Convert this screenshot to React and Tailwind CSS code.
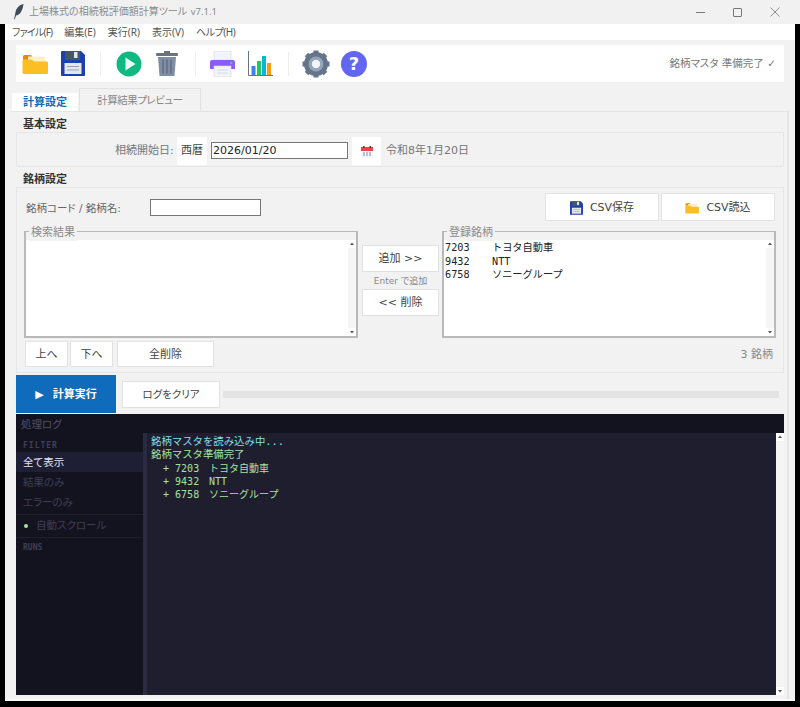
import React from "react";

const ui = "font-['DejaVu_Sans','Noto_Sans_CJK_JP',sans-serif] [font-feature-settings:'palt']";
const mono = "font-['DejaVu_Sans_Mono','Noto_Sans_CJK_JP',monospace] [font-feature-settings:normal]";

const FolderIcon = ({ className }) => (
  <svg viewBox="0 0 26 22" className={className}>
    <path d="M1 3.500C1 2.500 1.800 2 2.500 2H9l2 2.500h5V7H1z" fill="#e8890c" />
    <rect x="6" y="3.500" width="17" height="7" rx="1" fill="#fdf0c8" />
    <path d="M0.500 8c0-1 .8-1.500 1.500-1.500h8L12 8.500h12.500c.8 0 1.500.7 1.500 1.500v9.500c0 1-.7 1.500-1.500 1.500H2c-.8 0-1.500-.6-1.500-1.500z" fill="#fbbf24" />
  </svg>
);

const SaveIcon = ({ className }) => (
  <svg viewBox="0 0 24 25" className={className}>
    <path d="M1 0h19l4 4v20a1 1 0 0 1-1 1H1a1 1 0 0 1-1-1V1a1 1 0 0 1 1-1z" fill="#1e40af" />
    <rect x="4" y="0" width="15" height="9" fill="#475569" />
    <rect x="13" y="1" width="3.500" height="6" fill="#e5e7eb" />
    <rect x="3.500" y="12" width="17" height="11" fill="#e5e7eb" />
    <rect x="6" y="15" width="12" height="1" fill="#94a3b8" />
    <rect x="6" y="18.500" width="12" height="1" fill="#94a3b8" />
  </svg>
);

const ScrollBar = () => (
  <div className="flex w-[8px] flex-col justify-between bg-[#f5f5f5]">
    <svg viewBox="0 0 8 8" className="h-[8px] w-[8px] bg-white"><path d="M2 5h4L4 2.500z" fill="#555" /></svg>
    <svg viewBox="0 0 8 8" className="h-[8px] w-[8px] bg-white"><path d="M2 3h4L4 5.500z" fill="#555" /></svg>
  </div>
);

const Btn = ({ children, className = "" }) => (
  <div className={`flex items-center justify-center border border-[#e2e2e2] bg-white pt-[2px] text-[#444] ${className}`}>{children}</div>
);

const ListFrame = ({ title, children }) => (
  <div className="relative h-[107px] w-[334px] border-2 border-t-[1px] border-[#b9b9b9]">
    <span className="absolute top-[-7px] left-[3px] bg-[#f2f2f2] px-[2px] text-[11px] leading-[16px] text-[#8a8a8a]">{title}</span>
    <div className="mt-[8px] flex h-[96px] justify-between bg-white">
      <div className={`${mono} pt-[1px] pl-[1px] text-[10.200px] leading-[13.500px] text-[#222]`}>{children}</div>
      <ScrollBar />
    </div>
  </div>
);

const StockRow = ({ code, name }) => (
  <div className="flex">
    <span className="w-[47px]">{code}</span>
    <span>{name}</span>
  </div>
);

const LogRow = ({ code, name }) => (
  <div className="flex text-[10px]">
    <span className="w-[58px] whitespace-pre">{"  + " + code}</span>
    <span>{name}</span>
  </div>
);

const Section = ({ title, className, children }) => (
  <>
    <div className="ml-[23px] h-[20px] text-[11px] leading-[25px] font-bold text-[#333]">{title}</div>
    <div className={`border border-[#e6e6e6] ${className}`}>{children}</div>
  </>
);

export default function App() {
  return (
    <div className={`${ui} h-[707px] w-[800px] overflow-hidden bg-black`}>
      {/* Title bar */}
      <div className="flex h-[24px] items-center bg-[#f1f1f1]">
        <svg viewBox="0 0 12 16" className="ml-[13px] h-[16px] w-[12px]">
          <path d="M10.500 0C6 1 3.500 4 2.500 8L2 11l-1 4 .8.300L3 11.500C7 11 9.500 7 10.500 0z" fill="#3f4a5a" />
        </svg>
        <span className="ml-[4px] font-['Noto_Sans','Noto_Sans_CJK_JP',sans-serif] text-[10px] text-[#8b8b8b]">
          上場株式の相続税評価額計算ツール <span className="ml-[1px] text-[9.500px]">v7.1.1</span>
        </span>
        <div className="ml-auto flex items-center gap-[28px] pr-[20px]">
          <div className="h-[1px] w-[9px] bg-[#777]" />
          <div className="h-[9px] w-[9px] rounded-[1px] border border-[#777]" />
          <svg viewBox="0 0 10 10" className="h-[10px] w-[10px]"><path d="M.5.5l9 9M9.500.5l-9 9" stroke="#777" strokeWidth="0.800" /></svg>
        </div>
      </div>

      <div className="flex h-[677px]">
        <div className="w-[5px]" />
        <div className="flex w-[790px] flex-col bg-[#f2f2f2]">
          {/* Menu */}
          <div className="flex h-[16px] items-center gap-[12px] bg-white pl-[7px] font-['Noto_Sans','Noto_Sans_CJK_JP',sans-serif] text-[10px] text-[#555]">
            <span className="tracking-[-0.800px]">ファイル(F)</span>
            <span>編集(E)</span>
            <span>実行(R)</span>
            <span>表示(V)</span>
            <span className="tracking-[-0.500px]">ヘルプ(H)</span>
          </div>

          {/* Toolbar */}
          <div className="mt-[5px] ml-[11px] flex h-[37px] w-[768px] items-center bg-white">
            <FolderIcon className="ml-[6px] h-[22px] w-[26px]" />
            <SaveIcon className="ml-[13px] h-[25px] w-[24px]" />
            <div className="ml-[15px] h-[24px] w-[1px] bg-[#eee]" />
            <svg viewBox="0 0 26 26" className="ml-[15px] h-[26px] w-[26px]">
              <circle cx="13" cy="13" r="12.500" fill="#10b981" />
              <path d="M9.500 6.500L19.500 13l-10 6.500z" fill="#ecfdf5" />
            </svg>
            <svg viewBox="0 0 22 25" className="ml-[14px] h-[25px] w-[22px]">
              <rect x="8" y="0" width="6" height="2" fill="#6b7280" />
              <rect x="0" y="2" width="22" height="3" rx="1" fill="#6b7280" />
              <path d="M2 6h18l-1.500 19h-15z" fill="#7f8ea3" />
              <path d="M7 8.500v14M11 8.500v14M15 8.500v14" stroke="#5b6779" strokeWidth="1.200" />
            </svg>
            <div className="ml-[17px] h-[24px] w-[1px] bg-[#eee]" />
            <svg viewBox="0 0 25 26" className="ml-[14px] h-[26px] w-[25px]">
              <rect x="4" y="0" width="17" height="9" fill="#f1f5f9" stroke="#d4d8de" strokeWidth="0.600" />
              <path d="M0 11a2 2 0 0 1 2-2h21a2 2 0 0 1 2 2v7H0z" fill="#8b5cf6" />
              <circle cx="21" cy="12" r="1.200" fill="#34d399" />
              <rect x="4" y="15" width="17" height="11" fill="#f1f5f9" stroke="#d4d8de" strokeWidth="0.600" />
              <path d="M7 19h11M7 22h11" stroke="#cbd5e1" strokeWidth="0.800" />
            </svg>
            <svg viewBox="0 0 25 25" className="ml-[13px] h-[25px] w-[25px]">
              <path d="M.5 0v24.500H25" fill="none" stroke="#6b7280" strokeWidth="1" />
              <rect x="3.500" y="15" width="4" height="9" fill="#3b82f6" />
              <rect x="9" y="10" width="4" height="14" fill="#22c55e" />
              <rect x="14" y="5" width="4" height="19" fill="#06b6d4" />
              <rect x="19" y="12" width="4" height="12" fill="#f59e0b" />
            </svg>
            <div className="ml-[15px] h-[24px] w-[1px] bg-[#eee]" />
            <svg viewBox="0 0 28 28" className="ml-[13px] h-[28px] w-[28px]">
              <path d="M14 .5v6M14 21.500v6M.5 14h6M21.500 14h6M4.500 4.500l4 4M19.500 19.500l4 4M23.500 4.500l-4 4M8.500 19.500l-4 4" stroke="#64748b" strokeWidth="5" />
              <circle cx="14" cy="14" r="9.500" fill="none" stroke="#64748b" strokeWidth="5" />
              <circle cx="14" cy="14" r="7.500" fill="#94a3b8" />
              <circle cx="14" cy="14" r="4.200" fill="#f1f5f9" />
            </svg>
            <div className="ml-[11px] flex h-[26px] w-[26px] items-center justify-center rounded-full bg-[#6366f1] text-[18px] font-bold text-white">?</div>
            <span className="mr-[8px] ml-auto text-[10.500px] text-[#777]">銘柄マスタ 準備完了 ✓</span>
          </div>

          {/* Tabs */}
          <div className="mt-[6px] ml-[7px] flex h-[23px] items-end">
            <div className="flex h-[18px] w-[66px] items-center justify-center bg-white pt-[3px] text-[11px] font-bold text-[#0f6cbd]">計算設定</div>
            <div className="ml-[1px] flex h-[23px] w-[122px] items-center justify-center border border-b-0 border-[#e2e2e2] pt-[1px] text-[10.500px] tracking-[-0.500px] text-[#888]">計算結果プレビュー</div>
          </div>

          {/* Tab pane */}
          <div className="ml-[6px] flex w-[778px] flex-1 flex-col border-t border-r-2 border-[#e4e4e4] pl-[5px]">
            <div className="-ml-[16px]">
              <Section title="基本設定" className="ml-[16px] flex h-[35px] w-[768px] items-center pt-[2px] text-[11px] text-[#777]">
                <span className="mt-[2px] ml-[98px] w-[62px]">相続開始日:</span>
                <Btn className="h-[28px] w-[30px] border-0 text-[11px]">西暦</Btn>
                <div className="ml-[4px] flex h-[17px] w-[137px] items-center border border-[#777] bg-white pt-[1px] pl-[1px] text-[11px] text-[#222]">2026/01/20</div>
                <Btn className="ml-[4px] h-[28px] w-[29px] border-0">
                  <svg viewBox="0 0 12 12" className="h-[12px] w-[12px]">
                    <rect x="0" y="1" width="12" height="4" fill="#ef4444" />
                    <rect x="2" y="0" width="1.500" height="2" fill="#991b1b" />
                    <rect x="8.500" y="0" width="1.500" height="2" fill="#991b1b" />
                    <rect x="0" y="5" width="12" height="7" fill="#f1f5f9" />
                    <path d="M2 7h2M5 7h2M8 7h2M2 9h2M5 9h2M8 9h2" stroke="#6b7280" strokeWidth="0.800" />
                  </svg>
                </Btn>
                <span className="mt-[2px] ml-[5px]">令和8年1月20日</span>
              </Section>
              <Section title="銘柄設定" className="ml-[16px] h-[186px] w-[768px]">
                <div className="flex h-[43px] items-start">
                  <span className="mt-[13px] ml-[9px] w-[124px] text-[10.500px] text-[#666]">銘柄コード / 銘柄名:</span>
                  <div className="mt-[11px] h-[17px] w-[111px] border border-[#777] bg-white" />
                  <Btn className="mt-[5px] ml-[284px] h-[28px] w-[114px] gap-[7px] text-[11px]">
                    <SaveIcon className="h-[14px] w-[13px]" />
                    CSV保存
                  </Btn>
                  <Btn className="mt-[5px] ml-[2px] h-[28px] w-[114px] gap-[7px] text-[11px]">
                    <FolderIcon className="h-[12px] w-[14px]" />
                    CSV読込
                  </Btn>
                </div>
                <div className="flex items-start pl-[7px]">
                  <ListFrame title="検索結果" />
                  <div className="ml-[4px] flex w-[77px] flex-col pt-[14px]">
                    <Btn className="h-[27px] text-[11px]">追加 &gt;&gt;</Btn>
                    <div className="h-[17px] text-center text-[9px] leading-[18px] text-[#888]">Enter で追加</div>
                    <Btn className="h-[27px] text-[11px]">&lt;&lt; 削除</Btn>
                  </div>
                  <div className="ml-[3px]">
                    <ListFrame title="登録銘柄">
                      <StockRow code="7203" name="トヨタ自動車" />
                      <StockRow code="9432" name="NTT" />
                      <StockRow code="6758" name="ソニーグループ" />
                    </ListFrame>
                  </div>
                </div>
                <div className="mt-[3px] flex items-center pl-[8px] text-[11px]">
                  <Btn className="h-[26px] w-[43px]">上へ</Btn>
                  <Btn className="ml-[2px] h-[26px] w-[43px]">下へ</Btn>
                  <Btn className="ml-[4px] h-[26px] w-[97px]">全削除</Btn>
                  <span className="mt-[2px] mr-[10px] ml-auto text-[#888]">3 銘柄</span>
                </div>
              </Section>
              {/* Run row */}
              <div className="mt-[2px] ml-[16px] flex h-[38px] w-[768px] items-center">
                <div className="flex h-[38px] w-[100px] items-center justify-center gap-[9px] bg-[#0f6cbd] pt-[2px] text-[11px] font-bold text-white">
                  <span className="text-[11px]">▶</span>
                  計算実行
                </div>
                <Btn className="ml-[6px] h-[27px] w-[98px] text-[10.500px]">ログをクリア</Btn>
                <div className="ml-[3px] h-[7px] w-[556px] bg-[#e4e4e4]" />
              </div>
              {/* Log panel */}
              <div className="mt-[1px] ml-[16px] flex h-[281px] w-[768px] flex-col bg-[#13131f]">
                <div className="flex h-[19px] items-center pt-[2px] pl-[5px] text-[10.500px] text-[#4f4f68]">処理ログ</div>
                <div className="flex flex-1">
                  <div className="flex w-[127px] flex-col">
                    <div className={`${mono} mt-[7px] ml-[7px] h-[12px] text-[8px] font-bold tracking-[1px] text-[#3f3f55]`}>FILTER</div>
                    <div className="flex h-[20px] items-center bg-[#1e1e35] pt-[2px] pl-[7px] text-[10.500px] text-[#e4e4ee]">全て表示</div>
                    <div className="flex h-[20px] items-center pt-[2px] pl-[7px] text-[10.500px] text-[#3f3f55]">結果のみ</div>
                    <div className="flex h-[20px] items-center pt-[2px] pl-[7px] text-[10.500px] text-[#3f3f55]">エラーのみ</div>
                    <div className="mt-[2px] flex h-[24px] items-center border-y border-[#1e1e2e] pl-[8px] text-[10.500px] text-[#3f3f55]">
                      <span className="mr-[8px] h-[4px] w-[4px] rounded-full bg-[#a6e3a1]" />
                      自動スクロール
                    </div>
                    <div className={`${mono} mt-[4px] ml-[7px] text-[8px] font-bold text-[#3f3f55]`}>RUNS</div>
                  </div>
                  <div className="w-[4px] bg-[#2a2a40]" />
                  <div className={`${mono} flex-1 bg-[#1e1e2e] pt-[2px] pl-[4px] text-[10.400px] leading-[13.250px] text-[#a6e3a1]`}>
                    <div className="text-[#89dceb]">銘柄マスタを読み込み中...</div>
                    <div>銘柄マスタ準備完了</div>
                    <LogRow code="7203" name="トヨタ自動車" />
                    <LogRow code="9432" name="NTT" />
                    <LogRow code="6758" name="ソニーグループ" />
                  </div>
                  <ScrollBar />
                </div>
              </div>
            </div>
          </div>
          <div className="h-[2px] bg-[#fafafa]" />
        </div>
        <div className="w-[5px]" />
      </div>
    </div>
  );
}
